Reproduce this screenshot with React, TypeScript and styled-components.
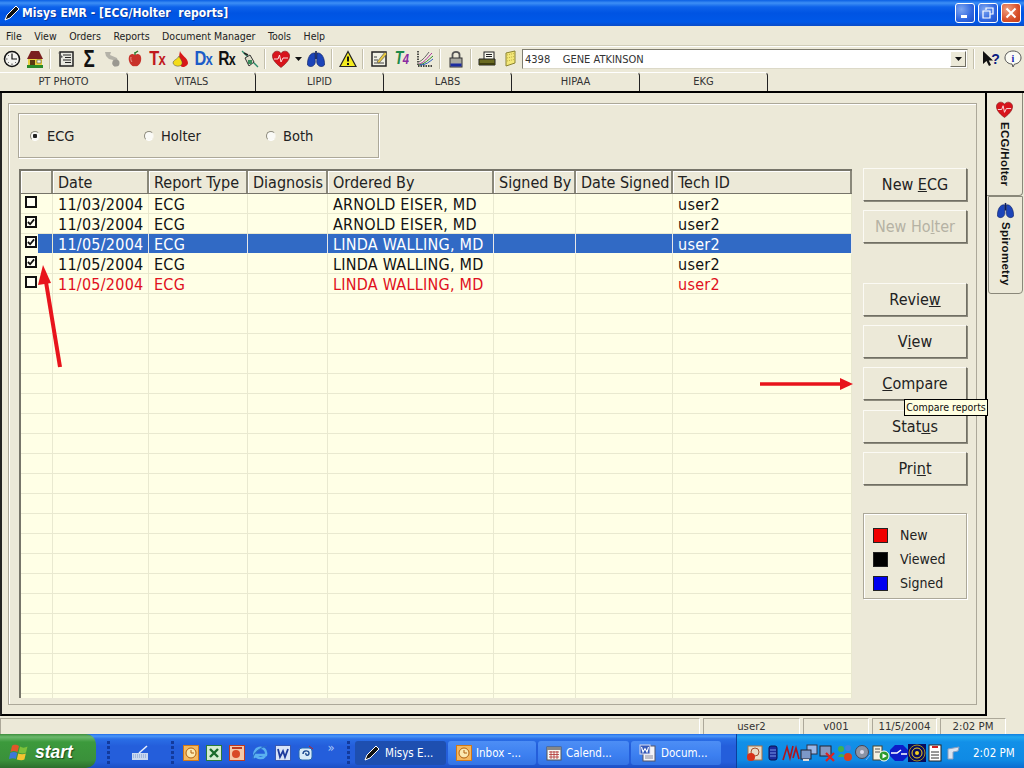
import React from "react";
import styled, { createGlobalStyle } from "styled-components";

const GlobalStyle = createGlobalStyle`
  html, body { margin: 0; padding: 0; background: #ece9d8; overflow: hidden; }
  #root { width: 1024px; height: 768px; }
`;

const UI_FONT = `"DejaVu Sans", "Noto Sans", "Liberation Sans", sans-serif`;

const Screen = styled.div`
  position: relative;
  width: 1024px;
  height: 768px;
  display: flex;
  flex-direction: column;
  overflow: hidden;
  background: #ece9d8;
  color: #111;
  font-family: ${UI_FONT};
  font-stretch: condensed;
  font-size: 12px;
`;

/* ---------- title bar ---------- */
const TitleBar = styled.div`
  height: 26px;
  flex: none;
  display: flex;
  align-items: center;
  padding: 0 3px 0 3px;
  background: linear-gradient(180deg, #0a5fe4 0, #3d8ff5 3px, #0d62ea 7px, #0054e3 13px, #0058e8 22px, #0a4cc8 26px);
  color: #fff;
`;
const TitleText = styled.div`
  margin-left: 1px;
  flex: 1;
  font-weight: bold;
  font-size: 12px;
  letter-spacing: 0.05px;
  white-space: pre;
  text-shadow: 1px 1px 0 #0b3aa0;
`;
const WinButton = styled.div<{ $close?: boolean }>`
  width: 20px;
  height: 20px;
  margin-left: 3px;
  box-sizing: border-box;
  border: 1px solid #fff;
  border-radius: 3px;
  display: flex;
  align-items: center;
  justify-content: center;
  background: ${(p) =>
    p.$close
      ? "radial-gradient(circle at 30% 30%, #f0a080, #d8502a 60%, #c23c18)"
      : "radial-gradient(circle at 30% 30%, #7ea6f0, #2f66e0 60%, #1f50c8)"};
`;

/* ---------- menu + toolbar ---------- */
const MenuBar = styled.div`
  height: 20px;
  flex: none;
  display: flex;
  align-items: center;
  gap: 12.5px;
  padding-left: 6px;
  font-size: 10.5px;
  color: #222;
  border-bottom: 1px solid #d0cdb8;
  box-sizing: border-box;
`;
const Toolbar = styled.div`
  height: 26px;
  flex: none;
  display: flex;
  align-items: center;
  box-sizing: border-box;
  border-top: 1px solid #fff;
  padding-bottom: 2px;
`;
const Tool = styled.div<{ $w?: number }>`
  width: ${(p) => p.$w ?? 23}px;
  height: 20px;
  flex: none;
  display: flex;
  align-items: center;
  justify-content: center;
`;
const ToolSep = styled.div<{ $w?: number }>`
  width: ${(p) => p.$w ?? 8}px;
  height: 20px;
  flex: none;
  display: flex;
  justify-content: center;
  &::after {
    content: "";
    width: 1px;
    height: 100%;
    background: #c4c0ac;
    border-right: 1px solid #fff;
  }
`;
const ToolLetters = styled.span<{ $color: string; $size?: number; $italic?: boolean }>`
  display: inline-block;
  font-family: "Liberation Sans", sans-serif;
  font-stretch: normal;
  font-weight: bold;
  font-style: ${(p) => (p.$italic ? "italic" : "normal")};
  font-size: ${(p) => p.$size ?? 21}px;
  letter-spacing: -1px;
  line-height: 20px;
  color: ${(p) => p.$color};
  transform: scaleX(0.78);
  small {
    font-size: 0.8em;
  }
`;
const FourGlyph = styled.small`
  color: #8a2aa0;
`;
const HelpMark = styled.span`
  font-family: "Liberation Sans", sans-serif;
  font-stretch: normal;
  font-weight: bold;
  font-size: 14px;
  line-height: 18px;
  color: #0a1c80;
  margin-left: -7px;
`;
const Combo = styled.div`
  width: 446px;
  height: 20px;
  margin-left: 1px;
  flex: none;
  box-sizing: border-box;
  border: 1px solid #7f7d70;
  border-right-color: #dcd9c8;
  border-bottom-color: #dcd9c8;
  background: #fff;
  display: flex;
  align-items: center;
  padding-left: 2px;
  font-size: 11px;
  color: #333;
  white-space: pre;
  position: relative;
`;
const ComboText = styled.span`
  flex: 1;
  padding-top: 1px;
`;
const ComboButton = styled.div`
  width: 16px;
  height: 16px;
  margin-right: 1px;
  box-sizing: border-box;
  background: #ece9d8;
  border: 1px solid;
  border-color: #fff #716f64 #716f64 #fff;
  display: flex;
  align-items: center;
  justify-content: center;
`;

/* ---------- top tabs ---------- */
const TabStrip = styled.div`
  height: 19px;
  flex: none;
  display: flex;
`;
const TopTab = styled.div`
  width: 128px;
  flex: none;
  box-sizing: border-box;
  border-top: 1px solid #fff;
  border-right: 1px solid #222;
  border-top-right-radius: 4px;
  padding-bottom: 2px;
  display: flex;
  align-items: center;
  justify-content: center;
  font-size: 11px;
  color: #333;
`;

/* ---------- main area ---------- */
const Main = styled.div`
  height: 625px;
  flex: none;
  display: flex;
  border-top: 2px solid #000;
  box-sizing: border-box;
`;
const Workspace = styled.div`
  width: 987px;
  flex: none;
  box-sizing: border-box;
  border-left: 2px solid #222;
  border-right: 2px solid #000;
  border-bottom: 2px solid #000;
  padding: 10px 9px 9px 6px;
  display: flex;
`;
const Frame = styled.div`
  flex: 1;
  box-sizing: border-box;
  border: 1px solid #aca899;
  box-shadow: inset 1px 1px 0 #fff;
  padding: 9px 9px 6px 9px;
  display: flex;
  flex-direction: column;
`;
const RadioGroup = styled.div`
  width: 361px;
  height: 45px;
  flex: none;
  box-sizing: border-box;
  border: 1px solid #aca899;
  box-shadow: inset 1px 1px 0 #fff, 1px 1px 0 #fff;
  margin-bottom: 11px;
  display: flex;
  align-items: center;
  padding: 1px 0 0 11px;
  font-size: 14.5px;
  color: #222;
`;
const RadioItem = styled.label`
  width: 114px;
  flex: none;
  display: flex;
  align-items: center;
  gap: 7px;
  &:nth-child(2) {
    width: 122px;
  }
`;
const RadioDot = styled.span<{ $on?: boolean }>`
  width: 10px;
  height: 10px;
  flex: none;
  box-sizing: border-box;
  border-radius: 50%;
  background: radial-gradient(circle, ${(p) => (p.$on ? "#222 0 2px, #f8f8f4 2.5px" : "#fafaf6 0 100%")});
  border: 1px solid;
  border-color: #8c8a7c #f4f2e8 #fff #8c8a7c;
`;
const BodyRow = styled.div`
  flex: 1;
  min-height: 0;
  display: flex;
  gap: 11px;
  margin-top: -1px;
`;
const GridBox = styled.div`
  width: 833px;
  flex: none;
  margin: 1px 0 0 1px;
  box-sizing: border-box;
  border-left: 2px solid #77756a;
  overflow: hidden;
  display: flex;
  flex-direction: column;
  background: #ffffe6;
  font-size: 16px;
`;
const COLS = "32px 96px 99px 80px 166px 82px 97px 179px";
const HeaderRow = styled.div`
  height: 25px;
  flex: none;
  display: grid;
  grid-template-columns: ${COLS};
  box-sizing: border-box;
  border-top: 2px solid #77756a;
  border-bottom: 1px solid #77756a;
  background: #ece9d8;
`;
const HeadCell = styled.div`
  box-sizing: border-box;
  border-right: 2px solid #8a887a;
  box-shadow: inset 1px 1px 0 #fff;
  padding-left: 5px;
  line-height: 23px;
  color: #222;
  white-space: nowrap;
  overflow: hidden;
`;
const Row = styled.div<{ $selected?: boolean; $color?: string }>`
  height: 20px;
  flex: none;
  display: grid;
  grid-template-columns: ${COLS};
  letter-spacing: 0.25px;
  color: ${(p) => (p.$selected ? "#fff" : p.$color ?? "#111")};
`;
const Cell = styled.div<{ $selected?: boolean }>`
  box-sizing: border-box;
  border-right: 1px solid ${(p) => (p.$selected ? "#e8e8e8" : "#e9e9d0")};
  border-bottom: 1px solid ${(p) => (p.$selected ? "#ffffe6" : "#e9e9d0")};
  background: ${(p) => (p.$selected ? "#316ac5" : "transparent")};
  padding-left: 5px;
  line-height: 21px;
  white-space: nowrap;
  overflow: hidden;
`;
const CheckCell = styled.div<{ $selected?: boolean }>`
  box-sizing: border-box;
  border-right: 1px solid #e9e9d0;
  border-bottom: 1px solid ${(p) => (p.$selected ? "#ffffe6" : "#e9e9d0")};
  background: ${(p) => (p.$selected ? "linear-gradient(90deg, #ffffe6 17px, #316ac5 17px)" : "transparent")};
  padding: 2px 0 0 4px;
`;
const CheckBox = styled.div`
  width: 12px;
  height: 12px;
  box-sizing: border-box;
  border: 2px solid #111;
  background: #fffff4;
  display: flex;
  align-items: center;
  justify-content: center;
`;

const ButtonColumn = styled.div`
  width: 104px;
  flex: none;
  display: flex;
  flex-direction: column;
  gap: 9px;
`;
const ActionButton = styled.div<{ $disabled?: boolean; $top?: number }>`
  height: 33px;
  flex: none;
  margin-top: ${(p) => p.$top ?? 0}px;
  box-sizing: border-box;
  background: #ece9d8;
  border: 1px solid;
  border-color: #fbfaf4 #716f64 #716f64 #fbfaf4;
  box-shadow: 1px 1px 0 #8c8a7c;
  display: flex;
  align-items: center;
  justify-content: center;
  font-size: 16px;
  color: ${(p) => (p.$disabled ? "#b5b2a4" : "#222")};
`;
const Legend = styled.div`
  height: 86px;
  margin-top: 19px;
  box-sizing: border-box;
  border: 1px solid #aca899;
  box-shadow: inset 1px 1px 0 #fff, 1px 1px 0 #fff;
  padding: 12px 0 0 9px;
  display: flex;
  flex-direction: column;
  gap: 6px;
  font-size: 14px;
  color: #222;
`;
const LegendRow = styled.div`
  height: 18px;
  display: flex;
  align-items: center;
  gap: 12px;
`;
const Swatch = styled.span<{ $color: string }>`
  width: 15px;
  height: 15px;
  flex: none;
  background: ${(p) => p.$color};
  border: 1px solid #222;
  box-sizing: border-box;
`;

/* ---------- vertical tabs ---------- */
const SideTabs = styled.div`
  flex: 1;
  display: flex;
  flex-direction: column;
`;
const SideTab = styled.div<{ $active?: boolean }>`
  height: ${(p) => (p.$active ? 103 : 98)}px;
  margin-left: ${(p) => (p.$active ? 0 : 1)}px;
  margin-right: 1px;
  box-sizing: border-box;
  background: #ece9d8;
  border: 1px solid #8a887a;
  border-left: ${(p) => (p.$active ? "none" : "1px solid #8a887a")};
  border-top: ${(p) => (p.$active ? "none" : "1px solid #8a887a")};
  border-bottom-right-radius: 4px;
  border-bottom-left-radius: ${(p) => (p.$active ? 0 : 3)}px;
  display: flex;
  flex-direction: column;
  align-items: center;
  padding-top: ${(p) => (p.$active ? 8 : 5)}px;
  gap: ${(p) => (p.$active ? 4 : 3)}px;
`;
const SideLabel = styled.span`
  writing-mode: vertical-rl;
  font-family: "Liberation Sans", sans-serif;
  font-stretch: normal;
  font-weight: bold;
  font-size: 11.5px;
  letter-spacing: 0.3px;
  color: #111;
`;

/* ---------- status bar ---------- */
const StatusBar = styled.div`
  height: 16px;
  flex: none;
  margin-top: 2px;
  display: flex;
  font-size: 11.3px;
  color: #333;
  box-sizing: border-box;
`;
const StatusPanel = styled.div<{ $w: number }>`
  width: ${(p) => p.$w}px;
  flex: none;
  box-sizing: border-box;
  border-top: 1px solid #aca899;
  border-left: 1px solid #aca899;
  border-right: 1px solid #fff;
  margin-right: 3px;
  display: flex;
  align-items: center;
  justify-content: center;
`;

/* ---------- task bar ---------- */
const TaskBar = styled.div`
  height: 34px;
  flex: none;
  display: flex;
  align-items: center;
  background: linear-gradient(180deg, #1f6be8 0, #4a96f8 2px, #2a6ee6 5px, #245edb 12px, #245edb 28px, #1c4fc4 34px);
  color: #fff;
`;
const StartButton = styled.div`
  width: 96px;
  height: 34px;
  flex: none;
  box-sizing: border-box;
  display: flex;
  align-items: center;
  gap: 5px;
  padding: 3px 0 0 9px;
  border-radius: 0 10px 10px 0;
  background: linear-gradient(180deg, #3d8f3d 0, #6cb86c 3px, #3c9a3c 8px, #3a913a 26px, #2c6e2c 34px);
  font-family: "Liberation Sans", sans-serif;
  font-stretch: normal;
  font-style: italic;
  font-weight: bold;
  font-size: 17.5px;
  text-shadow: 1px 1px 1px #1c4a1c;
`;
const Grip = styled.div<{ $left: number; $right: number }>`
  width: 3px;
  height: 24px;
  flex: none;
  margin: 4px ${(p) => p.$right}px 0 ${(p) => p.$left}px;
  background: repeating-linear-gradient(180deg, #123a9c 0 3px, transparent 3px 5px);
`;
const QuickIcon = styled.div<{ $w?: number }>`
  width: ${(p) => p.$w ?? 23}px;
  flex: none;
  margin-top: 4px;
  display: flex;
  justify-content: center;
`;
const Chevron = styled.div`
  width: 28px;
  flex: none;
  margin-top: -8px;
  text-align: center;
  font-size: 13px;
  color: #a8c8f8;
`;
const TaskButton = styled.div<{ $w: number; $active?: boolean }>`
  width: ${(p) => p.$w}px;
  height: 24px;
  flex: none;
  margin: 4px 2px 0 0;
  box-sizing: border-box;
  border-radius: 3px;
  display: flex;
  align-items: center;
  gap: 4px;
  padding-left: 8px;
  font-size: 11.5px;
  background: ${(p) => (p.$active ? "#1e4fb0" : "linear-gradient(180deg, #4d8ef5, #3c7ff0 60%, #3474e4)")};
  white-space: nowrap;
`;
const Tray = styled.div`
  flex: 1;
  height: 34px;
  margin-left: 13px;
  box-sizing: border-box;
  display: flex;
  align-items: center;
  padding: 4px 0 0 9px;
  background: linear-gradient(180deg, #0f7fe0 0, #22a8f0 3px, #1290e8 8px, #0f8ae4 26px, #0c6cd0 34px);
  border-left: 1px solid #0c3f9c;
  font-size: 11.5px;
`;
const TrayIcon = styled.div`
  width: 18px;
  flex: none;
  display: flex;
  justify-content: center;
`;
const Clock = styled.span`
  margin-left: 11px;
`;

/* ---------- overlays ---------- */
const Tooltip = styled.div`
  position: absolute;
  left: 904px;
  top: 399px;
  width: 84px;
  height: 17px;
  box-sizing: border-box;
  background: #ffffe1;
  border: 1px solid #000;
  font-size: 10.5px;
  line-height: 15px;
  text-align: center;
  white-space: nowrap;
  color: #111;
`;
const ArrowLayer = styled.svg`
  position: absolute;
  left: 0;
  top: 0;
  width: 1024px;
  height: 768px;
  pointer-events: none;
`;

/* ---------- drawings ---------- */
const Svg = ({ s = 18, children }: { s?: number; children: React.ReactNode }) => (
  <svg width={s} height={s} viewBox="0 0 18 18">
    {children}
  </svg>
);

const Pen = () => (
  <svg width="18" height="18" viewBox="0 0 18 18">
    <path d="M2 16 L4 11 L13 2 L16 5 L7 14 Z" fill="#111" stroke="#fff" strokeWidth="1" />
  </svg>
);
const ClockIcon = () => (
  <Svg>
    <circle cx="9" cy="9" r="7.5" fill="#f4f4f0" stroke="#111" strokeWidth="1.5" />
    <path d="M9 3.5V9H14" fill="none" stroke="#111" strokeWidth="1.2" />
    <path d="M3 9h1.5M9 13.5V15M4.8 4.8l1 1M4.8 13.2l1-1M13.2 13.2l-1-1" stroke="#555" />
  </Svg>
);
const HouseIcon = () => (
  <Svg>
    <path d="M1 9 L5 1 H13 L17 9 Z" fill="#7a1f1f" />
    <rect x="2" y="9" width="14" height="7" fill="#e8d040" />
    <rect x="4" y="10" width="5" height="6" fill="#5a3a10" />
    <rect x="11" y="10" width="4" height="3" fill="#f8f8e0" stroke="#333" strokeWidth=".5" />
    <rect x="1" y="15" width="16" height="3" fill="#2a8a2a" />
  </Svg>
);
const FormIcon = () => (
  <Svg>
    <rect x="3" y="2" width="13" height="14" fill="#e8e8e0" stroke="#222" strokeWidth="1.5" />
    <path d="M6 5h8M8 7.5h6M6 10h8M8 12.5h6" stroke="#222" />
    <path d="M1 2 L6 7 L4 8 Z" fill="#555" />
  </Svg>
);
const GhostIcon = () => (
  <Svg>
    <path d="M2 2 L8 2 L7 5 L14 8 L15 12 L12 17 L9 14 L10 10 L6 9 L3 6 Z" fill="#b4b2a8" />
    <circle cx="13" cy="13" r="3.5" fill="#9a9890" />
  </Svg>
);
const AppleIcon = () => (
  <Svg>
    <path d="M9 5 C4 2 2 7 3 11 C4 15 7 17 9 16 C11 17 14 15 15 11 C16 7 14 2 9 5 Z" fill="#c8322a" />
    <path d="M9 5 V2 M9 3 L12 1" stroke="#2a7a2a" strokeWidth="1.4" fill="none" />
    <path d="M5 7 C4.5 9 5 11 6 12" stroke="#e89a90" fill="none" />
  </Svg>
);
const FlameIcon = () => (
  <Svg>
    <path d="M8 1 C9 5 16 8 16 13 C16 15 13 17 11 17 C7 17 6 10 8 1 Z" fill="#d81818" />
    <path d="M7 6 C8 9 11 11 10 14 C9 17 2 17 1 13 C1 10 6 9 7 6 Z" fill="#f4dc18" stroke="#444" strokeWidth=".5" />
  </Svg>
);
const SyringeIcon = () => (
  <Svg>
    <path d="M1 1 L17 17" stroke="#2a8a6a" strokeWidth="1.3" />
    <path d="M4 8 L9 5 L13 12 L8 16 Z" fill="#dcdcc8" stroke="#333" />
    <path d="M3 3 L7 5" stroke="#222" strokeWidth="1.4" />
    <rect x="7" y="10" width="4" height="4" fill="#3a8a5a" />
  </Svg>
);
const Heart = ({ s = 18 }: { s?: number }) => (
  <Svg s={s}>
    <path d="M9 17.5 C3 13 0 9 .5 5 C1.5 .5 7 0 9 3.5 C11 0 16.5 .5 17.5 5 C18 9 15 13 9 17.5 Z" fill="#d8141c" stroke="#7a1014" strokeWidth=".6" />
    <path d="M2 9 H6 L7.5 5 L9 12 L11 8 H16" fill="none" stroke="#fbe0e0" strokeWidth="1" />
  </Svg>
);
const Lungs = ({ s = 18 }: { s?: number }) => (
  <Svg s={s}>
    <path d="M8 3 C3 2 0 9 .5 15 C3 18 8 16.5 8.3 12 Z" fill="#1c44b8" stroke="#0a1c5c" strokeWidth=".6" />
    <path d="M10 3 C15 2 18 9 17.5 15 C15 18 10 16.5 9.7 12 Z" fill="#1c44b8" stroke="#0a1c5c" strokeWidth=".6" />
    <path d="M9 1 V9" stroke="#0a1c5c" strokeWidth="1.6" />
  </Svg>
);
const WarningIcon = () => (
  <Svg>
    <path d="M9 1.5 L17 16.5 H1 Z" fill="#f4ec20" stroke="#222" strokeWidth="1.2" />
    <path d="M9 6.5 V11.5" stroke="#111" strokeWidth="2" />
    <rect x="8" y="13" width="2" height="2" fill="#111" />
  </Svg>
);
const NoteIcon = () => (
  <Svg>
    <rect x="2" y="2" width="14" height="14" fill="#f0f0e4" stroke="#222" strokeWidth="1.5" />
    <path d="M4 13h10M4 10h4M4 7h3" stroke="#444" />
    <path d="M7 12 L15 2 L17 4 L9 13 Z" fill="#e8c840" stroke="#444" strokeWidth=".6" />
  </Svg>
);
const ChartIcon = () => (
  <Svg>
    <path d="M2 1 V16 H17" fill="none" stroke="#111" strokeDasharray="1.5 1" strokeWidth="1.4" />
    <path d="M3 14 C8 13 11 8 16 3" fill="none" stroke="#b0309a" />
    <path d="M3 15 C9 14 12 10 17 6" fill="none" stroke="#2a8a2a" />
    <path d="M4 15 C10 15 13 12 17 9" fill="none" stroke="#2a5ac0" />
    <path d="M3 12 C7 10 10 6 13 2" fill="none" stroke="#666" />
  </Svg>
);
const LockIcon = () => (
  <Svg>
    <path d="M5.5 8 V4.5 C5.5 1 12.5 1 12.5 4.5 V8" fill="none" stroke="#555" strokeWidth="1.8" />
    <rect x="3" y="8" width="12" height="9" fill="#a8a8a0" stroke="#333" />
    <rect x="3.5" y="13.5" width="11" height="3" fill="#1c2ca0" />
  </Svg>
);
const PrinterIcon = () => (
  <Svg>
    <rect x="6" y="2" width="10" height="8" fill="#fafaf0" stroke="#222" />
    <path d="M8 4.5h6M8 6.5h6" stroke="#222" />
    <path d="M1 9 H17 V15 H1 Z" fill="#6a6a20" stroke="#222" />
    <rect x="1" y="13" width="16" height="2" fill="#3e3e10" />
  </Svg>
);
const StickyIcon = () => (
  <Svg>
    <path d="M5 3 L14 1 V13 L5 16 Z" fill="#f4e878" stroke="#8a8230" />
    <path d="M6 5 L13 3.5M6 8 L13 6.5M6 11 L13 9.5" stroke="#c0b040" strokeDasharray="1 1" />
  </Svg>
);
const HelpArrow = () => (
  <Svg>
    <path d="M3 1 V14 L6.5 11 L9 16 L11 15 L8.8 10.5 H13 Z" fill="#111" />
  </Svg>
);
const InfoIcon = () => (
  <Svg>
    <path d="M9 1 C14 1 17 4 17 8 C17 11 14 14 10.5 14 L9 17 L8 14 C4 14 1 11 1 8 C1 4 4 1 9 1 Z" fill="#fbfbf4" stroke="#555" />
    <text x="9" y="12" textAnchor="middle" fontFamily="Liberation Serif" fontWeight="bold" fontSize="10" fill="#1020b0">i</text>
  </Svg>
);
const SmallArrow = ({ color = "#111" }: { color?: string }) => (
  <svg width="7" height="4" viewBox="0 0 7 4">
    <path d="M0 0H7L3.5 4Z" fill={color} />
  </svg>
);
const TinyCheck = () => (
  <svg width="8" height="8" viewBox="0 0 9 9">
    <path d="M1 4.5 L3.5 7 L8 1.5" fill="none" stroke="#111" strokeWidth="2" />
  </svg>
);
const Flag = () => (
  <svg width="21" height="19" viewBox="0 0 21 19">
    <path d="M3 3 C5 1 8 2 10 3 L8.5 9 C6 8 4 7.5 1.5 9 Z" fill="#e2562a" />
    <path d="M11 3.5 C13 5 16 5 18.5 3.5 L17 9.5 C15 11 12 10.5 9.5 9.5 Z" fill="#7cc13a" />
    <path d="M1.2 10 C4 8.6 6 9 8.2 10 L6.8 16 C5 15 3 15 0 16 Z" fill="#3c78d8" />
    <path d="M9.2 10.5 C12 11.5 14.5 11.5 16.8 10.5 L15.4 16.5 C13 18 10 17 7.8 16.5 Z" fill="#f4c430" />
  </svg>
);

const Tile = ({ bg, border, children }: { bg: string; border: string; children?: React.ReactNode }) => (
  <svg width="16" height="16" viewBox="0 0 16 16">
    <rect x=".5" y=".5" width="15" height="15" fill={bg} stroke={border} />
    {children}
  </svg>
);
const OutlookTile = () => (
  <Tile bg="#f4b860" border="#d07818">
    <circle cx="8" cy="8" r="5" fill="#fbe8b0" stroke="#b06010" />
    <path d="M8 5V8H11" fill="none" stroke="#b06010" />
  </Tile>
);
const ExcelTile = () => (
  <Tile bg="#d4ecd0" border="#2a7a3a">
    <path d="M4 4 L12 12 M12 4 L4 12" stroke="#1a6a2a" strokeWidth="2.4" />
  </Tile>
);
const PptTile = () => (
  <Tile bg="#f4c8a8" border="#c03a20">
    <circle cx="7" cy="9" r="4" fill="#d84a28" />
    <rect x="3" y="2" width="10" height="2" fill="#c03a20" />
  </Tile>
);
const IeIcon = () => (
  <svg width="18" height="18" viewBox="0 0 18 18">
    <path d="M14 12 C12 15 6 15 5 11 H15 C16 6 12 3 8 4 C4 5 2 10 4 14" fill="none" stroke="#5ab0f0" strokeWidth="2.4" />
    <path d="M2 15 C1 11 9 3 16 2" fill="none" stroke="#2a70c8" strokeWidth="1.2" />
  </svg>
);
const WordTile = () => (
  <Tile bg="#d8e4f8" border="#3a5ab0">
    <path d="M3 4 L5 12 L8 6 L10 12 L13 4" fill="none" stroke="#1c3a9c" strokeWidth="1.8" />
  </Tile>
);
const OutlookExpress = () => (
  <svg width="16" height="16" viewBox="0 0 16 16">
    <rect x="1" y="3" width="13" height="12" rx="3" fill="#d8ecf8" stroke="#2a6ab0" />
    <path d="M5 9 C5 5 11 5 11 8 C11 11 7 11 8 8" fill="none" stroke="#1c4a90" strokeWidth="1.4" />
    <path d="M11 1 L15 4" stroke="#c02020" />
  </svg>
);
const KeyboardIcon = () => (
  <svg width="18" height="16" viewBox="0 0 18 16">
    <path d="M1 8 H17 V15 H1 Z" fill="#c8d8f0" />
    <path d="M2 10h14M2 12h14" stroke="#7a98c8" strokeDasharray="1 1" />
    <path d="M8 8 L16 1" stroke="#e8f0fc" strokeWidth="1.6" />
  </svg>
);
const CalendarIcon = () => (
  <svg width="16" height="16" viewBox="0 0 16 16">
    <rect x="1" y="2" width="14" height="13" fill="#f8f8f4" stroke="#555" />
    <rect x="1" y="2" width="14" height="3" fill="#888" />
    <path d="M3 7h10M3 9.5h10M3 12h10M5 6v8M8 6v8M11 6v8" stroke="#b03030" strokeWidth=".8" />
  </svg>
);
const DocIcon = () => (
  <svg width="18" height="18" viewBox="0 0 18 18">
    <rect x="4" y="2" width="12" height="15" fill="#f4f4f8" stroke="#556" />
    <rect x="1" y="1" width="10" height="9" fill="#3458b8" stroke="#dde" />
    <path d="M2.5 3 L4 8 L6 4.5 L8 8 L9.5 3" fill="none" stroke="#fff" strokeWidth="1.1" />
    <path d="M6 12h8M6 14h8" stroke="#889" />
  </svg>
);

const trayIcons: React.ReactNode[] = [
  <svg key="0" width="18" height="18" viewBox="0 0 18 18"><rect x="2" y="2" width="14" height="14" fill="#e8dcc8" stroke="#b07040" /><circle cx="9" cy="8" r="4" fill="none" stroke="#a05030" /><circle cx="5" cy="13" r="4" fill="#d83018" /></svg>,
  <svg key="1" width="14" height="18" viewBox="0 0 14 18"><rect x="3" y="2" width="8" height="14" rx="2" fill="#1c2c9c" stroke="#0a1050" /><path d="M4 6h6M4 9h6M4 12h6" stroke="#7898e8" /></svg>,
  <svg key="2" width="18" height="18" viewBox="0 0 18 18"><path d="M1 16 L5 3 L8 14 L11 2 M11 14 L14 4 L17 15" fill="none" stroke="#b0141c" strokeWidth="1.6" /></svg>,
  <svg key="3" width="18" height="18" viewBox="0 0 18 18"><rect x="7" y="1" width="10" height="9" fill="#9cb8e8" stroke="#334" /><rect x="1" y="6" width="10" height="9" fill="#7c98c8" stroke="#223" /><path d="M3 16h6" stroke="#ddd" strokeWidth="2" /></svg>,
  <svg key="4" width="18" height="18" viewBox="0 0 18 18"><rect x="2" y="2" width="11" height="10" fill="#8498c0" stroke="#223" /><path d="M8 9 L16 17 M16 9 L8 17" stroke="#e02020" strokeWidth="2.2" /></svg>,
  <svg key="5" width="18" height="18" viewBox="0 0 18 18"><circle cx="5" cy="5" r="3" fill="#40b050" /><circle cx="12" cy="4" r="3" fill="#4080e0" /><path d="M2 13 C3 9 8 9 9 13Z" fill="#40b050" /><circle cx="12" cy="13" r="4" fill="#d84020" /></svg>,
  <svg key="6" width="18" height="18" viewBox="0 0 18 18"><circle cx="8" cy="8" r="6.5" fill="#8a93a5" stroke="#445" /><circle cx="8" cy="8" r="2" fill="#dde" /><path d="M12 16 L16 11" stroke="#7ab0f0" /></svg>,
  <svg key="7" width="18" height="18" viewBox="0 0 18 18"><rect x="1" y="2" width="9" height="14" fill="#f4f0e0" stroke="#443" /><path d="M3 5h5M3 8h5" stroke="#555" /><circle cx="12" cy="12" r="5" fill="#2c9a2c" stroke="#fff" /><path d="M10.5 9.5 V14.5 L15 12 Z" fill="#fff" /></svg>,
  <svg key="8" width="18" height="18" viewBox="0 0 18 18"><path d="M5 1 H13 L18 6 V12 L13 17 H5 L0 12 V6 Z" fill="#0c1cc8" /><path d="M1 9 H7 L11 6 M11 10 H17" fill="none" stroke="#fff" strokeWidth="1.5" /></svg>,
  <svg key="9" width="18" height="18" viewBox="0 0 18 18"><rect width="18" height="18" fill="#080c5c" /><circle cx="9" cy="9" r="2" fill="#f4d020" /><circle cx="9" cy="9" r="5" fill="none" stroke="#f4d020" /><circle cx="9" cy="9" r="8" fill="none" stroke="#a09020" /></svg>,
  <svg key="10" width="16" height="18" viewBox="0 0 16 18"><rect x="2" y="1" width="12" height="16" fill="#fff" stroke="#222" /><path d="M4 8h8M4 11h8M4 14h8" stroke="#333" /><path d="M5 3h6" stroke="#d02020" strokeWidth="2" /></svg>,
  <svg key="11" width="16" height="16" viewBox="0 0 16 16"><path d="M3 4 L14 2 L13 6 L8 7 V14 H3 Z" fill="#dce4f0" stroke="#8aa0c0" /></svg>,
];

/* ---------- data ---------- */
type Report = { date: string; doctor: string; checked: boolean; selected?: boolean; color?: string };

const reports: Report[] = [
  { date: "11/03/2004", doctor: "ARNOLD EISER, MD", checked: false },
  { date: "11/03/2004", doctor: "ARNOLD EISER, MD", checked: true },
  { date: "11/05/2004", doctor: "LINDA WALLING, MD", checked: true, selected: true },
  { date: "11/05/2004", doctor: "LINDA WALLING, MD", checked: true },
  { date: "11/05/2004", doctor: "LINDA WALLING, MD", checked: false, color: "#e01020" },
];
const headers = ["Date", "Report Type", "Diagnosis", "Ordered By", "Signed By", "Date Signed", "Tech ID"];
const menus = ["File", "View", "Orders", "Reports", "Document Manager", "Tools", "Help"];
const topTabs = ["PT PHOTO", "VITALS", "LIPID", "LABS", "HIPAA", "EKG"];

const App = () => {
  const emptyRows = Array.from({ length: 21 }, (_, i) => i);
  return (
    <Screen>
      <GlobalStyle />
      <TitleBar>
        <Pen />
        <TitleText>{"Misys EMR - [ECG/Holter  reports]"}</TitleText>
        <WinButton>
          <svg width="12" height="12" viewBox="0 0 12 12"><rect x="2" y="8" width="6" height="3" fill="#fff" /></svg>
        </WinButton>
        <WinButton>
          <svg width="12" height="12" viewBox="0 0 12 12"><path d="M4 3V1H11V7H8.5M1 4H8V11H1Z" fill="none" stroke="#fff" strokeWidth="1.2" /></svg>
        </WinButton>
        <WinButton $close>
          <svg width="12" height="12" viewBox="0 0 12 12"><path d="M1.5 1.5L10.5 10.5M10.5 1.5L1.5 10.5" stroke="#fff" strokeWidth="2" /></svg>
        </WinButton>
      </TitleBar>

      <MenuBar>
        {menus.map((m) => (
          <span key={m}>{m}</span>
        ))}
      </MenuBar>

      <Toolbar>
        <Tool><ClockIcon /></Tool>
        <Tool><HouseIcon /></Tool>
        <ToolSep />
        <Tool><FormIcon /></Tool>
        <Tool><ToolLetters $color="#111" $size={24}>Σ</ToolLetters></Tool>
        <Tool><GhostIcon /></Tool>
        <Tool><AppleIcon /></Tool>
        <Tool><ToolLetters $color="#c0181c">T<small>x</small></ToolLetters></Tool>
        <Tool><FlameIcon /></Tool>
        <Tool><ToolLetters $color="#1c5cc8">D<small>x</small></ToolLetters></Tool>
        <Tool><ToolLetters $color="#111" $size={20}>R<small>x</small></ToolLetters></Tool>
        <Tool><SyringeIcon /></Tool>
        <ToolSep />
        <Tool><Heart /></Tool>
        <Tool $w={12}><SmallArrow /></Tool>
        <Tool><Lungs /></Tool>
        <ToolSep $w={9} />
        <Tool><WarningIcon /></Tool>
        <ToolSep />
        <Tool><NoteIcon /></Tool>
        <Tool>
          <ToolLetters $color="#1c8a4a" $size={18} $italic>T<FourGlyph>4</FourGlyph></ToolLetters>
        </Tool>
        <Tool><ChartIcon /></Tool>
        <ToolSep />
        <Tool><LockIcon /></Tool>
        <ToolSep />
        <Tool><PrinterIcon /></Tool>
        <Tool><StickyIcon /></Tool>
        <Combo>
          <ComboText>{"4398    GENE ATKINSON"}</ComboText>
          <ComboButton><SmallArrow /></ComboButton>
        </Combo>
        <ToolSep $w={11} />
        <Tool $w={22}><HelpArrow /><HelpMark>?</HelpMark></Tool>
        <Tool $w={24}><InfoIcon /></Tool>
      </Toolbar>

      <TabStrip>
        {topTabs.map((t) => (
          <TopTab key={t}>{t}</TopTab>
        ))}
      </TabStrip>

      <Main>
        <Workspace>
          <Frame>
            <RadioGroup>
              <RadioItem><RadioDot $on />ECG</RadioItem>
              <RadioItem><RadioDot />Holter</RadioItem>
              <RadioItem><RadioDot />Both</RadioItem>
            </RadioGroup>
            <BodyRow>
              <GridBox>
                <HeaderRow>
                  <HeadCell />
                  {headers.map((h) => (
                    <HeadCell key={h}>{h}</HeadCell>
                  ))}
                </HeaderRow>
                {reports.map((r, i) => (
                  <Row key={i} $selected={r.selected} $color={r.color}>
                    <CheckCell $selected={r.selected}>
                      <CheckBox>{r.checked && <TinyCheck />}</CheckBox>
                    </CheckCell>
                    <Cell $selected={r.selected}>{r.date}</Cell>
                    <Cell $selected={r.selected}>ECG</Cell>
                    <Cell $selected={r.selected} />
                    <Cell $selected={r.selected}>{r.doctor}</Cell>
                    <Cell $selected={r.selected} />
                    <Cell $selected={r.selected} />
                    <Cell $selected={r.selected}>user2</Cell>
                  </Row>
                ))}
                {emptyRows.map((i) => (
                  <Row key={i}>
                    <Cell /><Cell /><Cell /><Cell /><Cell /><Cell /><Cell /><Cell />
                  </Row>
                ))}
              </GridBox>
              <ButtonColumn>
                <ActionButton>New&nbsp;<u>E</u>CG</ActionButton>
                <ActionButton $disabled>New Ho<u>l</u>ter</ActionButton>
                <ActionButton $top={31}>Revie<u>w</u></ActionButton>
                <ActionButton>V<u>i</u>ew</ActionButton>
                <ActionButton><u>C</u>ompare</ActionButton>
                <ActionButton $top={1}>Stat<u>u</u>s</ActionButton>
                <ActionButton>Pri<u>n</u>t</ActionButton>
                <Legend>
                  <LegendRow><Swatch $color="#f00000" />New</LegendRow>
                  <LegendRow><Swatch $color="#000" />Viewed</LegendRow>
                  <LegendRow><Swatch $color="#0000f0" />Signed</LegendRow>
                </Legend>
              </ButtonColumn>
            </BodyRow>
          </Frame>
        </Workspace>
        <SideTabs>
          <SideTab $active>
            <Heart s={17} />
            <SideLabel>ECG/Holter</SideLabel>
          </SideTab>
          <SideTab>
            <Lungs s={17} />
            <SideLabel>Spirometry</SideLabel>
          </SideTab>
        </SideTabs>
      </Main>

      <StatusBar>
        <StatusPanel $w={700} />
        <StatusPanel $w={97}>user2</StatusPanel>
        <StatusPanel $w={66}>v001</StatusPanel>
        <StatusPanel $w={65}>11/5/2004</StatusPanel>
        <StatusPanel $w={66}>2:02 PM</StatusPanel>
      </StatusBar>

      <TaskBar>
        <StartButton><Flag />start</StartButton>
        <Grip $left={11} $right={21} />
        <QuickIcon $w={18}><KeyboardIcon /></QuickIcon>
        <Grip $left={22} $right={5} />
        <QuickIcon><OutlookTile /></QuickIcon>
        <QuickIcon><ExcelTile /></QuickIcon>
        <QuickIcon><PptTile /></QuickIcon>
        <QuickIcon><IeIcon /></QuickIcon>
        <QuickIcon><WordTile /></QuickIcon>
        <QuickIcon><OutlookExpress /></QuickIcon>
        <Chevron>»</Chevron>
        <Grip $left={2} $right={5} />
        <TaskButton $w={91} $active><Pen />Misys E...</TaskButton>
        <TaskButton $w={88}><OutlookTile />Inbox -...</TaskButton>
        <TaskButton $w={91}><CalendarIcon />Calend...</TaskButton>
        <TaskButton $w={90}><DocIcon />Docum...</TaskButton>
        <Tray>
          {trayIcons.map((icon, i) => (
            <TrayIcon key={i}>{icon}</TrayIcon>
          ))}
          <Clock>2:02 PM</Clock>
        </Tray>
      </TaskBar>

      <ArrowLayer viewBox="0 0 1024 768">
        <path d="M60 367 L46 282" stroke="#e8141c" strokeWidth="4" fill="none" />
        <path d="M43 265 L38 285 L51 283 Z" fill="#e8141c" />
        <path d="M760 384 H842" stroke="#e8141c" strokeWidth="3.5" fill="none" />
        <path d="M853 384 L840 378 V390 Z" fill="#e8141c" />
      </ArrowLayer>
      <Tooltip>Compare reports</Tooltip>
    </Screen>
  );
};

export default App;
